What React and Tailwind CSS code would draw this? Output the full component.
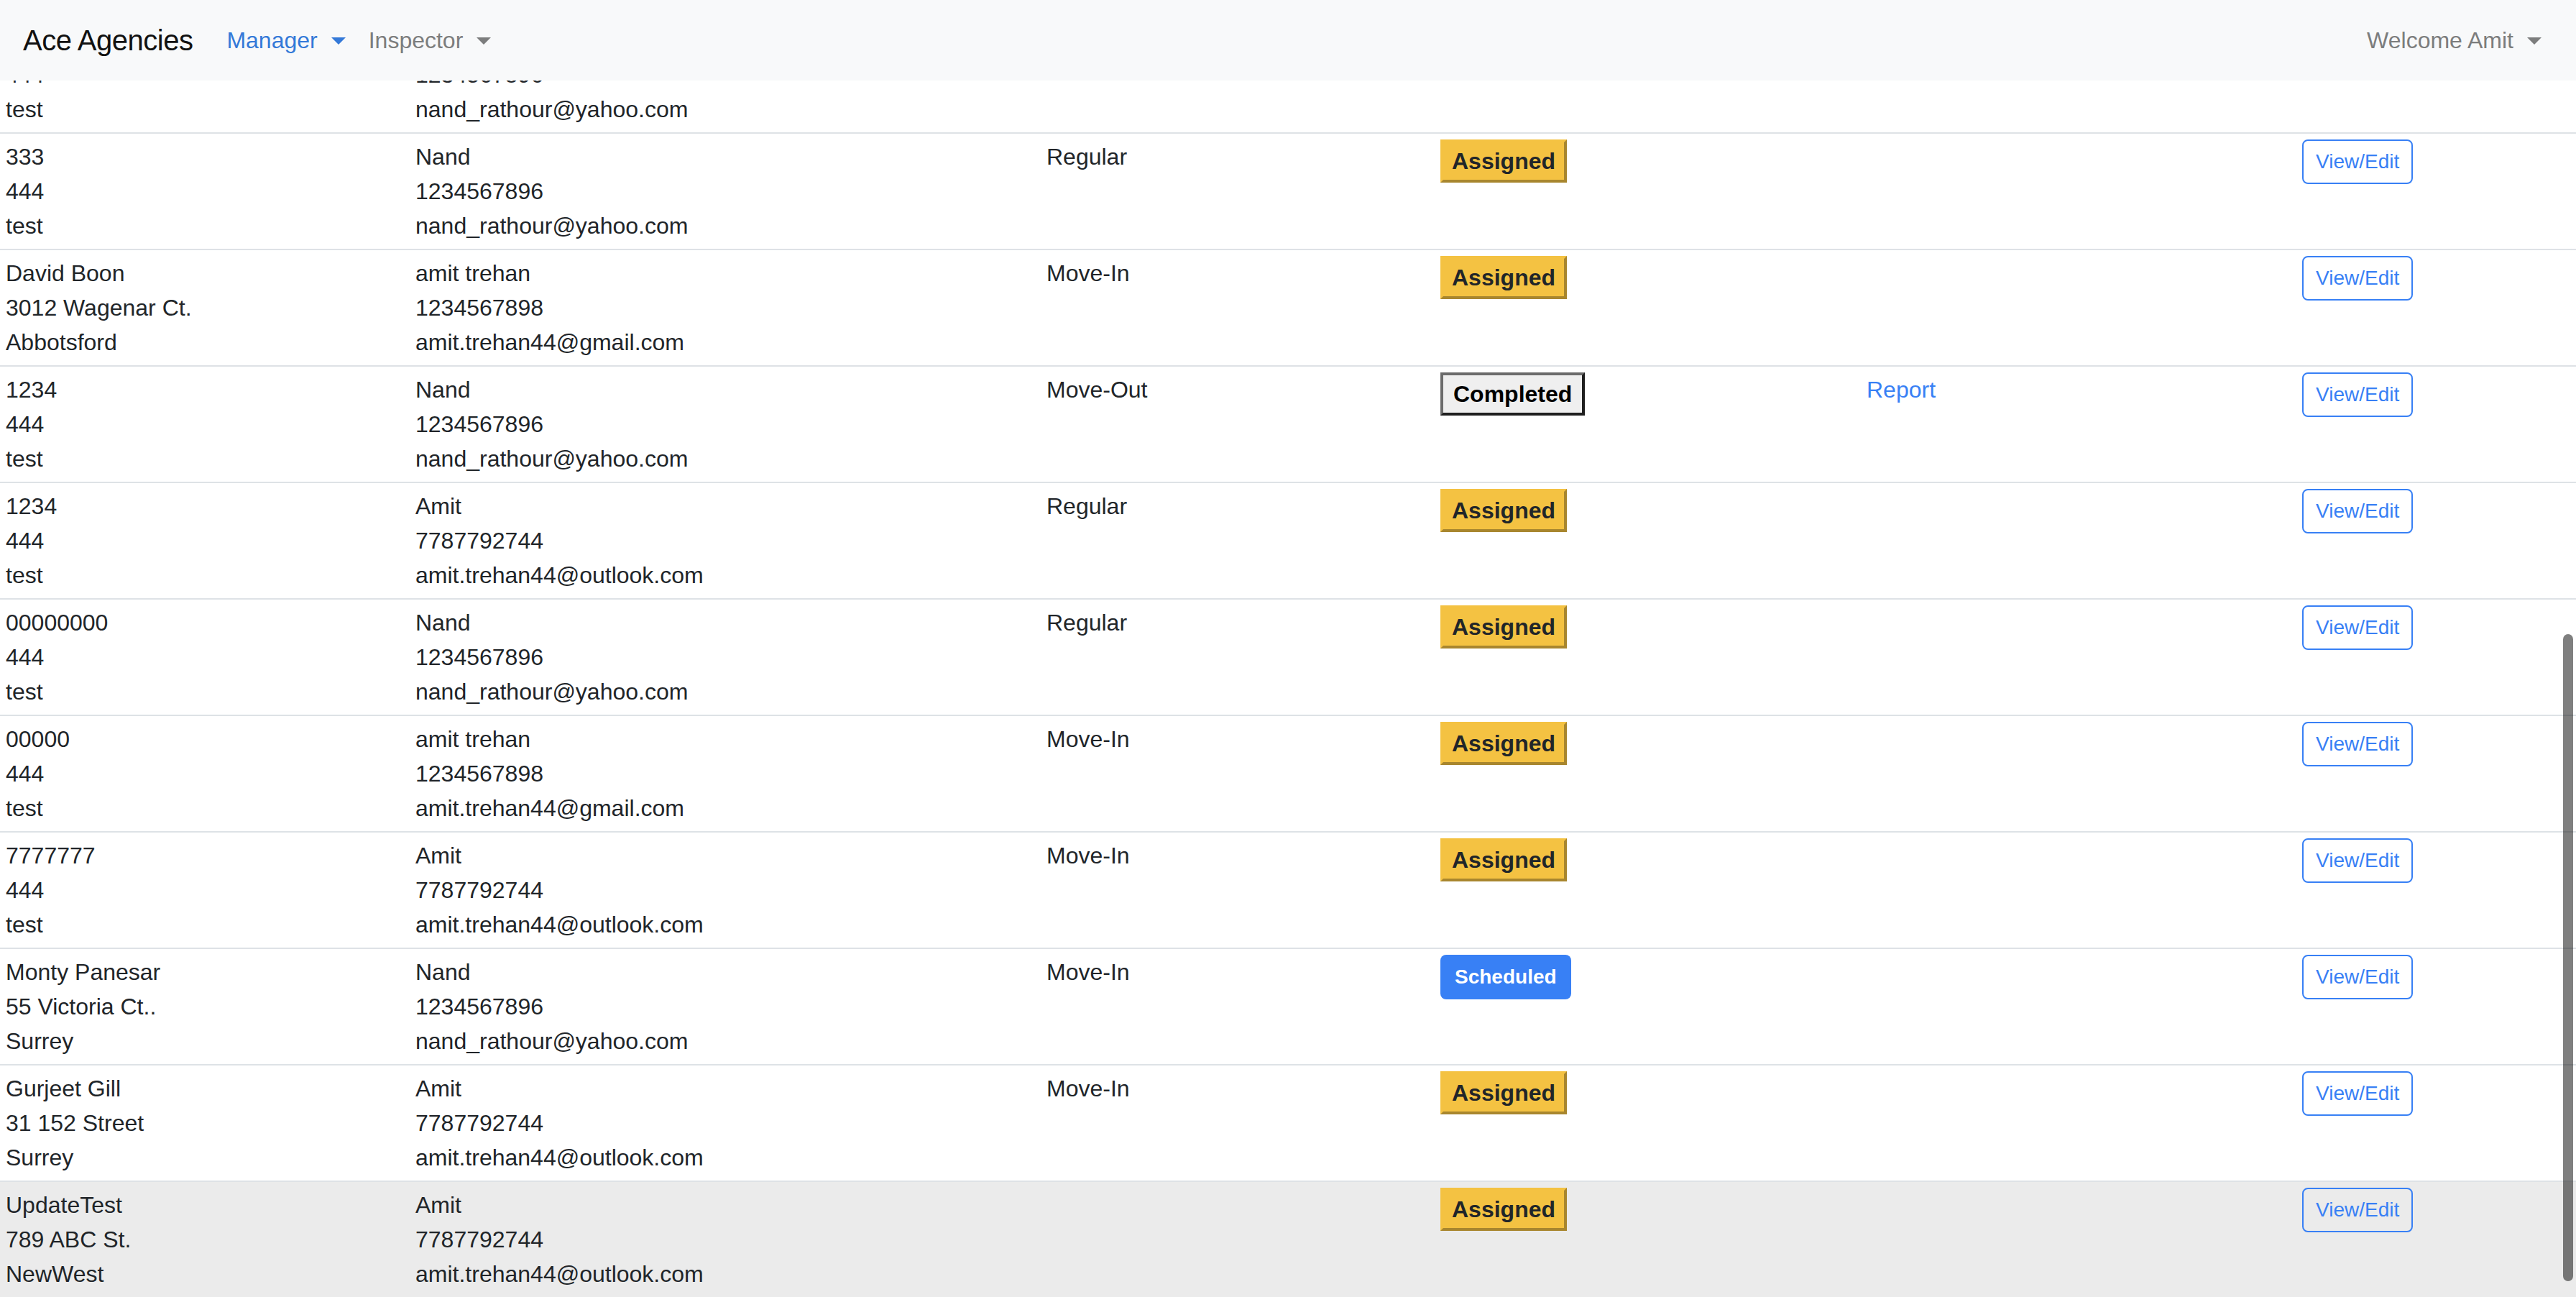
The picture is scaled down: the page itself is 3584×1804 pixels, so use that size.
import React from 'react';

// first row is scrolled mostly under the navbar, only its lower lines show
const rows = [
    { addr: ['\u00a0', '444', 'test'], contact: ['\u00a0', '1234567896', 'nand_rathour@yahoo.com'], type: '', status: '', hidden: true },
    { addr: ['333', '444', 'test'], contact: ['Nand', '1234567896', 'nand_rathour@yahoo.com'], type: 'Regular', status: 'Assigned' },
    { addr: ['David Boon', '3012 Wagenar Ct.', 'Abbotsford'], contact: ['amit trehan', '1234567898', 'amit.trehan44@gmail.com'], type: 'Move-In', status: 'Assigned' },
    { addr: ['1234', '444', 'test'], contact: ['Nand', '1234567896', 'nand_rathour@yahoo.com'], type: 'Move-Out', status: 'Completed', report: true },
    { addr: ['1234', '444', 'test'], contact: ['Amit', '7787792744', 'amit.trehan44@outlook.com'], type: 'Regular', status: 'Assigned' },
    { addr: ['00000000', '444', 'test'], contact: ['Nand', '1234567896', 'nand_rathour@yahoo.com'], type: 'Regular', status: 'Assigned' },
    { addr: ['00000', '444', 'test'], contact: ['amit trehan', '1234567898', 'amit.trehan44@gmail.com'], type: 'Move-In', status: 'Assigned' },
    { addr: ['7777777', '444', 'test'], contact: ['Amit', '7787792744', 'amit.trehan44@outlook.com'], type: 'Move-In', status: 'Assigned' },
    { addr: ['Monty Panesar', '55 Victoria Ct..', 'Surrey'], contact: ['Nand', '1234567896', 'nand_rathour@yahoo.com'], type: 'Move-In', status: 'Scheduled' },
    { addr: ['Gurjeet Gill', '31 152 Street', 'Surrey'], contact: ['Amit', '7787792744', 'amit.trehan44@outlook.com'], type: 'Move-In', status: 'Assigned' },
    { addr: ['UpdateTest', '789 ABC St.', 'NewWest'], contact: ['Amit', '7787792744', 'amit.trehan44@outlook.com'], type: '', status: 'Assigned', hover: true },
];

const Caret = () => (
    <span className="inline-block w-0 h-0 border-t-[10px] border-x-[10px] border-x-transparent border-t-current" />
);

const StatusBadge = ({ status }) => {
    if (!status) return null;
    if (status === 'Scheduled') {
        return (
            <span className="inline-flex items-center h-[62px] px-[20px] rounded-[8px] bg-[#3880f5] text-white text-[28px] font-bold">
                Scheduled
            </span>
        );
    }
    if (status === 'Completed') {
        return (
            <span className="inline-block border-4 border-t-[#6b6b6b] border-l-[#6b6b6b] border-b-[#1f1f1f] border-r-[#1f1f1f] bg-[#efefef] px-[14px] py-[8px] text-[32px] leading-[36px] font-bold text-black">
                Completed
            </span>
        );
    }
    return (
        <span className="inline-block border-4 border-t-[#f4c242] border-l-[#f4c242] border-b-[#a8862e] border-r-[#a8862e] bg-[#f4c242] px-[12px] py-[8px] text-[32px] leading-[36px] font-bold text-[#212529]">
            {status}
        </span>
    );
};

const App = () => {
    return (
        <div className="h-screen flex flex-col bg-white font-['Liberation_Sans',Arial,sans-serif] text-[#212529]">
            {/* navbar */}
            <nav className="h-[112px] shrink-0 flex items-center px-[32px] bg-[#f8f9fa]">
                <span className="text-[40px] leading-[60px] tracking-[-0.5px] text-[#111] mr-[31px]">Ace Agencies</span>
                <div className="flex items-center text-[32px] leading-[48px] text-[#3479d8] px-[16px]">
                    <span>Manager</span>
                    <span className="ml-[19px] mt-[2px] flex"><Caret /></span>
                </div>
                <div className="flex items-center text-[32px] leading-[48px] text-[#7c7d7d] px-[16px]">
                    <span>Inspector</span>
                    <span className="ml-[19px] mt-[2px] flex"><Caret /></span>
                </div>
                <div className="ml-auto flex items-center text-[32px] leading-[48px] text-[#7c7d7d] px-[16px]">
                    <span>Welcome Amit</span>
                    <span className="ml-[19px] mt-[2px] flex"><Caret /></span>
                </div>
            </nav>

            {/* scrolled table area */}
            <div className="flex-1 relative overflow-hidden">
                <div className="-mt-[90px] text-[32px] leading-[48px]">
                    {rows.map((r, i) => (
                        <div
                            key={i}
                            className={`grid grid-cols-[570px_878px_548px_593px_606px_1fr] border-t-2 border-[#dee2e6] ${r.hover ? 'bg-[#ebebeb]' : ''}`}
                        >
                            <div className="p-[8px]">
                                {r.addr.map((l, j) => <div key={j}>{l}</div>)}
                            </div>
                            <div className="p-[8px]">
                                {r.contact.map((l, j) => <div key={j}>{l}</div>)}
                            </div>
                            <div className="p-[8px]">{r.type}</div>
                            <div className="p-[8px]">
                                <StatusBadge status={r.status} />
                            </div>
                            <div className="p-[8px]">
                                {r.report && <span className="text-[#3880f5]">Report</span>}
                            </div>
                            <div className="py-[8px] pl-[8px]">
                                {!r.hidden && (
                                    <span className="inline-block border-2 border-[#3880f5] rounded-[8px] px-[17px] py-[8px] text-[28px] leading-[42px] text-[#3880f5]">
                                        View/Edit
                                    </span>
                                )}
                            </div>
                        </div>
                    ))}
                </div>

                {/* overlay scrollbar thumb */}
                <div className="absolute right-[4px] top-[770px] w-[14px] h-[900px] rounded-full bg-black/50" />
            </div>
        </div>
    );
};

export default App;
